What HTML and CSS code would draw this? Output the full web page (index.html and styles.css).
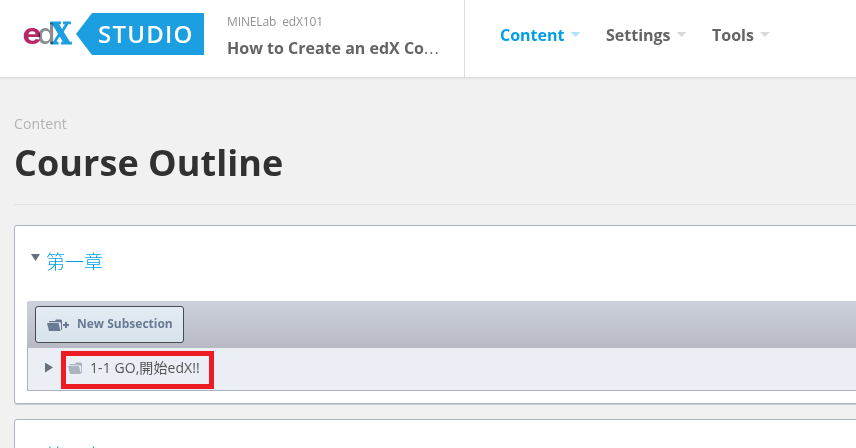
FILE: index.html
```html
<!DOCTYPE html>
<html lang="zh-Hant">
<head>
<meta charset="utf-8">
<title>Course Outline</title>
<link rel="stylesheet" href="styles.css">
</head>
<body>
<header class="header">
  <a class="brand">
    <svg width="184" height="44" viewBox="22 12 184 44" aria-label="edX Studio">
      <text class="logo-e" x="22.6" y="43.6" textLength="19" lengthAdjust="spacingAndGlyphs">e</text>
      <text class="logo-d" x="37.2" y="43.6" textLength="18" lengthAdjust="spacingAndGlyphs">d</text>
      <text class="logo-x" x="50.4" y="43.5" textLength="21" lengthAdjust="spacingAndGlyphs">X</text>
      <path d="M76 34 92 13H204V55H92Z" fill="#1b9fe0"/>
      <text class="logo-studio" x="98" y="42.5" textLength="94.5">STUDIO</text>
    </svg>
  </a>
  <div class="course">
    <span class="course-org">MINELab&nbsp; edX101</span>
    <span class="course-title">How to Create an edX Co<span class="dots">...</span></span>
  </div>
  <nav class="nav">
    <a class="nav-item active">Content<i class="caret"></i></a>
    <a class="nav-item settings">Settings<i class="caret"></i></a>
    <a class="nav-item tools">Tools<i class="caret"></i></a>
  </nav>
</header>
<main class="main">
  <div class="page-head">
    <div class="crumb">Content</div>
    <h1>Course Outline</h1>
  </div>
  <section class="section">
    <h2 class="section-title"><i class="toggle-down"></i><span>第一章</span></h2>
    <div class="list">
      <div class="toolbar">
        <button class="new-button">
          <svg width="23" height="12" viewBox="0 0 23 12"><path d="M2 3.3V2H8L9 .5H14L15 1.5V11H14V4.5L13 3.3Z" fill="#687b92"/><path d="M0 4H11.5L13.5 12H2Z" fill="#687b92"/><path d="M19 3v6M16 6h6" stroke="#687b92" stroke-width="2" fill="none"/></svg>
          <span>New Subsection</span>
        </button>
      </div>
      <div class="row">
        <i class="toggle-right"></i>
        <svg class="folder" width="15" height="12" viewBox="0 0 15 12"><path d="M1.5 3.3V2H7L8 .5H13L14 1.5V11H13.2V4.5L12 3.3Z" fill="#abb3c1"/><path d="M0 4H11L13 12H2Z" fill="#abb3c1"/></svg>
        <span class="row-title">1-1 GO,開始edX!!</span>
        <span class="highlight"></span>
      </div>
    </div>
  </section>
  <section class="section">
    <h2 class="section-title"><i class="toggle-down"></i><span>第二章</span></h2>
  </section>
</main>
</body>
</html>
```
FILE: styles.css
```css
* { box-sizing: border-box; }
body { margin: 0; height: 448px; overflow: hidden; background: #f1f1f1; font-family: "Open Sans", "Noto Sans CJK TC", sans-serif; }
.header { height: 78px; display: flex; background: #fff; border-bottom: 1px solid #dcdcdc; box-shadow: 0 1px 2px rgba(0,0,0,.07); }
.brand { width: 227px; padding: 12px 0 0 22px; }
.brand svg { display: block; }
.logo-e { font: 700 29px "Inter", "Liberation Sans"; fill: #b72667; }
.logo-d { font: 500 29px "Inter", "Liberation Sans"; fill: #8b8d90; mix-blend-mode: multiply; }
.logo-x { font: 700 29px "DejaVu Serif", serif; fill: #1b9fe0; stroke: #1b9fe0; stroke-width: 1; mix-blend-mode: multiply; }
.logo-studio { font: 600 24px "Open Sans"; fill: #fff; }
.course { width: 238px; border-right: 1px solid #dcdcdc; padding-top: 13px; display: flex; flex-direction: column; white-space: nowrap; }
.course-org { font-size: 12px; line-height: 17px; color: #929292; letter-spacing: -.13px; }
.course-title { margin-top: 7px; font-size: 16px; line-height: 22px; font-weight: 700; color: #646464; }
.dots { font-weight: 400; letter-spacing: 1px; }
.nav { display: flex; padding: 24px 0 0 35px; gap: 25.5px; }
.nav-item { display: flex; height: 22px; gap: 6px; font-size: 16px; line-height: 22px; font-weight: 700; color: #646464; }
.nav-item.active { color: #009fe6; }
.caret { margin-top: 8px; width: 10px; height: 5px; background: #d9d9d9; clip-path: polygon(0 0, 100% 0, 50% 100%); }
.active .caret { background: #b2e2f8; }
.main { padding-left: 14px; }
.page-head { height: 127px; border-bottom: 1px solid #e2e2e2; padding-top: 36px; }
.crumb { font-size: 14px; line-height: 20px; color: #b3b3b3; letter-spacing: .1px; }
h1 { margin: 4px 0 0; font-size: 36px; line-height: 50px; font-weight: 700; letter-spacing: .05px; color: #313131; }
.section { height: 179px; margin: 20px -4px 0 0; background: #fff; border: 1px solid #acb4c4; border-radius: 3px; box-shadow: 0 1px 1px rgba(0,0,0,.15); padding: 21px 0 0 12px; }
.section + .section { margin-top: 15px; }
.section-title { margin: 0; height: 30px; display: flex; padding-left: 4px; gap: 6px; font-size: 19px; line-height: 30px; font-weight: 300; color: #009fe6; }
.toggle-down { width: 9px; height: 7px; margin-top: 7px; background: #66717d; clip-path: polygon(0 0, 100% 0, 50% 100%); }
.list { margin-top: 24px; height: 90px; border: 1px solid #acb4c4; border-top: 0; border-radius: 3px 0 0 0; background: #ebeff5; }
.toolbar { height: 47px; margin-left: -1px; padding: 5px 8px; border-radius: 3px 0 0 0; background: linear-gradient(#cdd1dc, #b7bac3); }
.new-button { display: flex; align-items: center; gap: 7px; width: 149px; height: 37px; padding: 0 0 2px 11px; border: 1px solid #454b53; border-radius: 3px; background: linear-gradient(#e4ebf3, #d7e2ec); color: #687b92; font: 700 12px/18px "Open Sans"; white-space: nowrap; }
.new-button svg { margin-top: 2px; }
.row { position: relative; height: 42px; display: flex; align-items: center; padding-left: 17px; }
.toggle-right { width: 8px; height: 10px; margin-top: -3px; background: #66717d; clip-path: polygon(0 0, 100% 50%, 0 100%); }
.folder { margin: -2px 0 0 15px; }
.row-title { margin: -3px 0 0 7px; font-size: 14px; line-height: 20px; font-weight: 400; letter-spacing: .07px; color: #545454; white-space: nowrap; }
.highlight { position: absolute; left: 33px; top: 3px; width: 153px; height: 38px; border: 5px solid #ed1c24; }
```
